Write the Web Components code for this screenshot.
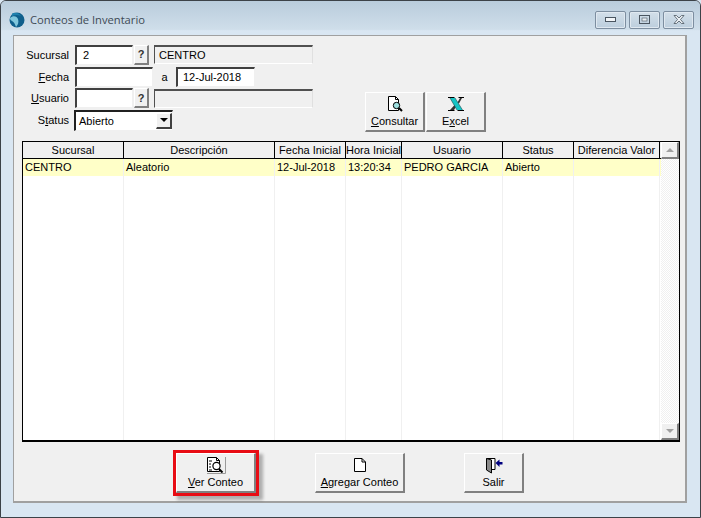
<!DOCTYPE html>
<html>
<head>
<meta charset="utf-8">
<style>
  html, body { margin: 0; padding: 0; background: #d9e6f2; }
  body { width: 701px; height: 518px; overflow: hidden; font: 11px "Liberation Sans", Arial, sans-serif; color: #000; }
  svg { display: block; }
</style>
</head>
<body>
<win-frame title="Conteos de Inventario">
  <inv-filter>
    <field-row label="Sucursal">
      <text-box style="width:58px">2</text-box>
      <help-btn></help-btn>
      <read-box style="width:159px">CENTRO</read-box>
    </field-row>
    <field-row label="Fecha" key="F" rest="echa">
      <text-box style="width:78px"></text-box>
      <span style="width:23px;text-align:center">a</span>
      <text-box plain style="width:79px;padding-left:5px">12-Jul-2018</text-box>
    </field-row>
    <field-row label="Usuario" key="U" rest="suario">
      <text-box style="width:58px"></text-box>
      <help-btn></help-btn>
      <read-box style="width:159px"></read-box>
    </field-row>
    <field-row label="Status" key="t" pre="S" rest="atus">
      <combo-box style="width:99px">Abierto</combo-box>
    </field-row>
    <win-button slot="actions" key="C" rest="onsultar" style="width:60px">
      <svg slot="icon" width="18" height="18" viewBox="0 0 18 18">
        <path d="M2.500 1.500h7l3 3v11h-10z" fill="#fff" stroke="#000"/>
        <path d="M9.500 1.500v3h3" fill="none" stroke="#000"/>
        <circle cx="10.500" cy="10.500" r="3.200" fill="#9fe0e0" stroke="#000"/>
        <path d="M13 13l3 3" stroke="#000" stroke-width="2"/>
      </svg>
    </win-button>
    <win-button slot="actions" pre="E" key="x" rest="cel" style="width:60px">
      <svg slot="icon" width="18" height="16" viewBox="0 0 18 16">
        <path d="M3 14 8 8.500l1.500 1.500L7 14zM10.500 6.500 13 2h2l-3 5.500z" fill="#333"/>
        <path d="M3 2h5l7.500 12h-5.500z" fill="#14c4c4"/>
        <path d="M3 2l7 12M8 2l7.500 12" stroke="#1a4a50" stroke-width=".6" fill="none"/>
        <path d="M1 1.500h6.500M11.500 1.500h5.500M1 14.500h6.500M10.500 14.500h6.500" stroke="#000"/>
      </svg>
    </win-button>
  </inv-filter>

  <data-grid>
    <grid-row head><span>Sucursal</span><span>Descripción</span><span>Fecha Inicial</span><span>Hora Inicial</span><span>Usuario</span><span>Status</span><span>Diferencia Valor</span></grid-row>
    <grid-row current><span>CENTRO</span><span>Aleatorio</span><span>12-Jul-2018</span><span>13:20:34</span><span>PEDRO GARCIA</span><span>Abierto</span><span></span></grid-row>
    <grid-row filler><span></span><span></span><span></span><span></span><span></span><span></span><span></span></grid-row>
  </data-grid>

  <action-bar>
    <win-button big highlight key="V" rest="er Conteo" style="width:80px">
      <svg slot="icon" width="20" height="18" viewBox="0 0 20 18">
        <path d="M1.500 1.500h9l3 3v11h-12z" fill="#fff" stroke="#000"/>
        <path d="M10.500 1.500v3h3M3 5h3M3 8h2M3 11h2M3 14h3" fill="none" stroke="#000"/>
        <circle cx="10.500" cy="10" r="3.600" fill="#fff" stroke="#000" stroke-width="1.200"/>
        <path d="M13 13l3.500 3.500" stroke="#000" stroke-width="2"/>
        <path d="M1 17.500h18.500V1" fill="none" stroke="#9a9a9a"/>
      </svg>
    </win-button>
    <win-button big key="A" rest="gregar Conteo" style="width:90px">
      <svg slot="icon" width="14" height="16" viewBox="0 0 14 16">
        <path d="M1.500 1.500h7.500l3.500 3.500v9.500h-11z" fill="#fff" stroke="#000"/>
        <path d="M9 1.500v3.500h3.500" fill="none" stroke="#000"/>
      </svg>
    </win-button>
    <win-button big rest="Salir" style="width:60px">
      <svg slot="icon" width="18" height="18" viewBox="0 0 18 18">
        <path d="M1.500 2.500h8.500v11h-4" fill="#fff" stroke="#000"/>
        <path d="M1.500 2.500l5 1.500v13l-5-3z" fill="#8a8a8a" stroke="#000"/>
        <path d="M10.500 7l4-3.500V6h3v2.500h-3V11z" fill="#000080"/>
      </svg>
    </win-button>
  </action-bar>
</win-frame>

<script>
function define(name, css, html, init) {
  customElements.define(name, class extends HTMLElement {
    constructor() {
      super();
      this.attachShadow({ mode: 'open' });
      this.shadowRoot.innerHTML = '<style>' + css + '</style>' + html;
      if(init) init(this, this.shadowRoot);
    }
  });
}

const raised = `
  background: #f0f0f0;
  border-style: solid;
  border-width: 1px 2px 2px 1px;
  border-color: #fff #808080 #808080 #fff;
`;

define('win-frame', `
  :host {
    display: flex; flex-direction: column;
    box-sizing: border-box; width: 701px; height: 518px;
    background: #d9e6f2;
    border: 1px solid #3c4248; border-radius: 6px 6px 0 0;
  }
  .bar {
    height: 33px; flex: none; display: flex; align-items: center;
    padding: 4px 6px 0 8px; box-sizing: border-box;
    background: linear-gradient(#b9ccdc, #cfdeea 86%, #d9e6f2 90%);
    border-radius: 5px 5px 0 0;
  }
  .title { font: 11.200px "Open Sans", sans-serif; color: #3e4a55; margin-left: 5px; flex: 1; }
  .ctl {
    height: 16px; margin-left: 3px; display: flex; align-items: center; justify-content: center;
    border: 1px solid #7d8ea0; border-radius: 2px; box-sizing: content-box;
    background: linear-gradient(#d3dfe9, #bccedd);
    box-shadow: inset 0 0 0 1px #dfe8f0;
  }
  .panel {
    flex: 1; margin: 1px 13px 14px 12px; box-sizing: border-box;
    display: flex; flex-direction: column;
    background: #f0f0f0; border: 1px solid #a0a0a0; border-width: 1px 2px 2px 1px;
    padding: 8px 7px 0 8px;
  }
`, `
  <div class="bar">
    <svg width="16" height="16" viewBox="0 0 16 16">
      <circle cx="8" cy="8" r="7.500" fill="#0f5f8c"/>
      <path d="M1 6c3-3 7-2 8 1 1 3 0 6-2 8-1-3-2-5-4-6-1-1-2-1-2-3z" fill="#7fc6dc"/>
      <path d="M3 1.500C6 0 10 1 12 4 9 2.500 6 2.500 3 4z" fill="#1f80ad"/>
    </svg>
    <span class="title"></span>
    <span class="ctl" style="width:29px"><svg width="11" height="5"><rect x=".5" y=".5" width="10" height="4" fill="#f2f5f8" stroke="#4a5560"/></svg></span>
    <span class="ctl" style="width:29px"><svg width="11" height="9"><rect x=".5" y=".5" width="10" height="8" fill="none" stroke="#4a5560"/><rect x="3" y="3" width="5" height="3" fill="#e8eef3" stroke="#4a5560" stroke-width=".6"/></svg></span>
    <span class="ctl" style="width:29px"><svg width="12" height="9" viewBox="0 0 12 9"><path d="M1 .5h2.500L6 3l2.500-2.500H11L7.500 4.500 11 8.500H8.500L6 6 3.500 8.500H1l3.500-4z" fill="#eef2f6" stroke="#4a5560" stroke-width=".8"/></svg></span>
  </div>
  <div class="panel"><slot></slot></div>
`, (el, root) => {
  root.querySelector('.title').textContent = el.getAttribute('title');
  el.removeAttribute('title');
});

define('inv-filter', `
  :host { display: flex; height: 97px; flex: none; }
  .rows { display: flex; flex-direction: column; width: 343px; }
  .acts { display: flex; align-items: flex-start; gap: 1px; padding-top: 48px; }
`, `<div class="rows"><slot></slot></div><div class="acts"><slot name="actions"></slot></div>`);

define('field-row', `
  :host { display: flex; align-items: center; height: 21.800px; }
  .lbl { width: 47px; margin-right: 5px; text-align: right; }
  u { text-decoration-thickness: 1px; }
  .items { display: flex; align-items: center; gap: 0; }
`, `<span class="lbl"></span><div class="items"><slot></slot></div>`, (el, root) => {
  const lbl = root.querySelector('.lbl');
  const key = el.getAttribute('key');
  if(key) {
    lbl.innerHTML = (el.getAttribute('pre') || '') + '<u>' + key + '</u>' + el.getAttribute('rest');
  } else {
    lbl.textContent = el.getAttribute('label');
  }
});

define('text-box', `
  :host {
    display: flex; align-items: center; box-sizing: border-box; height: 20px; padding-left: 6px; margin-left: 1px;
    background: #fff; border-style: solid; border-width: 2px 1px 1px 2px;
    border-color: #404040 #f0f0f0 #f0f0f0 #404040;
  }
  :host([plain]) { margin-left: 0; }
`, `<slot></slot>`);

define('read-box', `
  :host {
    display: flex; align-items: center; box-sizing: border-box; height: 19px; margin-left: 5px; padding-left: 4px;
    background: #f0f0f0; border-style: solid; border-width: 2px 1px 1px 1px;
    border-color: #505050 #e0e0e0 #fff #505050;
  }
`, `<slot></slot>`);

define('help-btn', `
  :host {
    display: flex; align-items: center; justify-content: center; box-sizing: border-box;
    width: 15px; height: 20px; margin-left: 1px; font-weight: bold; color: #333;
    background: #f0f0f0; border-style: solid; border-width: 1px 2px 2px 1px; border-color: #fff #808080 #808080 #fff;
  }
`, `?`);

define('combo-box', `
  :host {
    display: flex; align-items: center; justify-content: space-between; box-sizing: border-box; height: 21px;
    background: #fff; border-style: solid; border-width: 2px 1px 1px 2px; border-color: #202020 #f0f0f0 #f0f0f0 #202020;
    padding-left: 3px;
  }
  .arrow {
    width: 16px; height: 16px; display: flex; align-items: center; justify-content: center; box-sizing: border-box;
    background: #f0f0f0; border-style: solid; border-width: 1px 2px 2px 1px; border-color: #fff #404040 #404040 #fff;
  }
  i { width: 0; height: 0; border: 4px solid transparent; border-top-color: #000; border-bottom: 0; }
`, `<span><slot></slot></span><span class="arrow"><i></i></span>`);

define('win-button', `
  :host {
    display: flex; flex-direction: column; align-items: center; justify-content: flex-end;
    box-sizing: border-box; height: 40px; padding-bottom: 3px; ${raised}
  }
  :host([highlight]) {
    outline: 3px solid #e80c14;
    box-shadow: 4px 4px 3px 3px rgba(0,0,0,.28);
  }
  .ico { flex: 1; display: flex; align-items: center; justify-content: center; }
  u { text-decoration-thickness: 1px; }
`, `<span class="ico"><slot name="icon"></slot></span><span class="t"></span>`, (el, root) => {
  const pre = el.getAttribute('pre') || '';
  const key = el.getAttribute('key');
  root.querySelector('.t').innerHTML = pre + (key ? '<u>' + key + '</u>' : '') + (el.getAttribute('rest') || '');
});

define('data-grid', `
  :host {
    display: flex; box-sizing: border-box; width: 658px; height: 301px; flex: none;
    background: #fff; border: 1px solid #000; border-width: 1px 1px 2px 1px;
  }
  .rows { flex: 1; display: flex; flex-direction: column; min-width: 0; }
  .scroll { width: 18px; flex: none; display: flex; flex-direction: column; justify-content: space-between;
    background: repeating-conic-gradient(#f0f0f0 0 25%, #fff 0 50%) 0 0 / 2px 2px; }
  .sb { height: 17px; display: flex; align-items: center; justify-content: center; box-sizing: border-box;
    background: #f0f0f0; border-style: solid; border-width: 1px 2px 2px 1px; border-color: #fff #808080 #808080 #fff; }
  .up { width: 0; height: 0; border: 4px solid transparent; border-bottom-color: #a0a0a0; border-top: 0; }
  .down { width: 0; height: 0; border: 4px solid transparent; border-top-color: #a0a0a0; border-bottom: 0; }
`, `
  <div class="rows"><slot></slot></div>
  <div class="scroll"><div class="sb"><i class="up"></i></div><div class="sb"><i class="down"></i></div></div>
`);

define('grid-row', `
  :host {
    display: grid; grid-template-columns: 101px 151px 71px 56px 101px 71px 86px;
    height: 17px; flex: none; line-height: 17px;
  }
  :host([head]) { height: 16px; background: #f0f0f0; border-bottom: 1px solid #000; text-align: center; }
  :host([current]) { background: #ffffc8; }
  :host([filler]) { flex: 1; }
  ::slotted(span) { box-sizing: border-box; border-right: 1px solid #f0f0f0; padding: 0 2px; white-space: nowrap; overflow: hidden; }
  :host([head]) ::slotted(span) { border-right-color: #000; padding: 0; }
`, `<slot></slot>`);

define('action-bar', `
  :host { display: flex; gap: 59px; padding: 11px 0 0 154px; }
`, `<slot></slot>`);
</script>
</body>
</html>
